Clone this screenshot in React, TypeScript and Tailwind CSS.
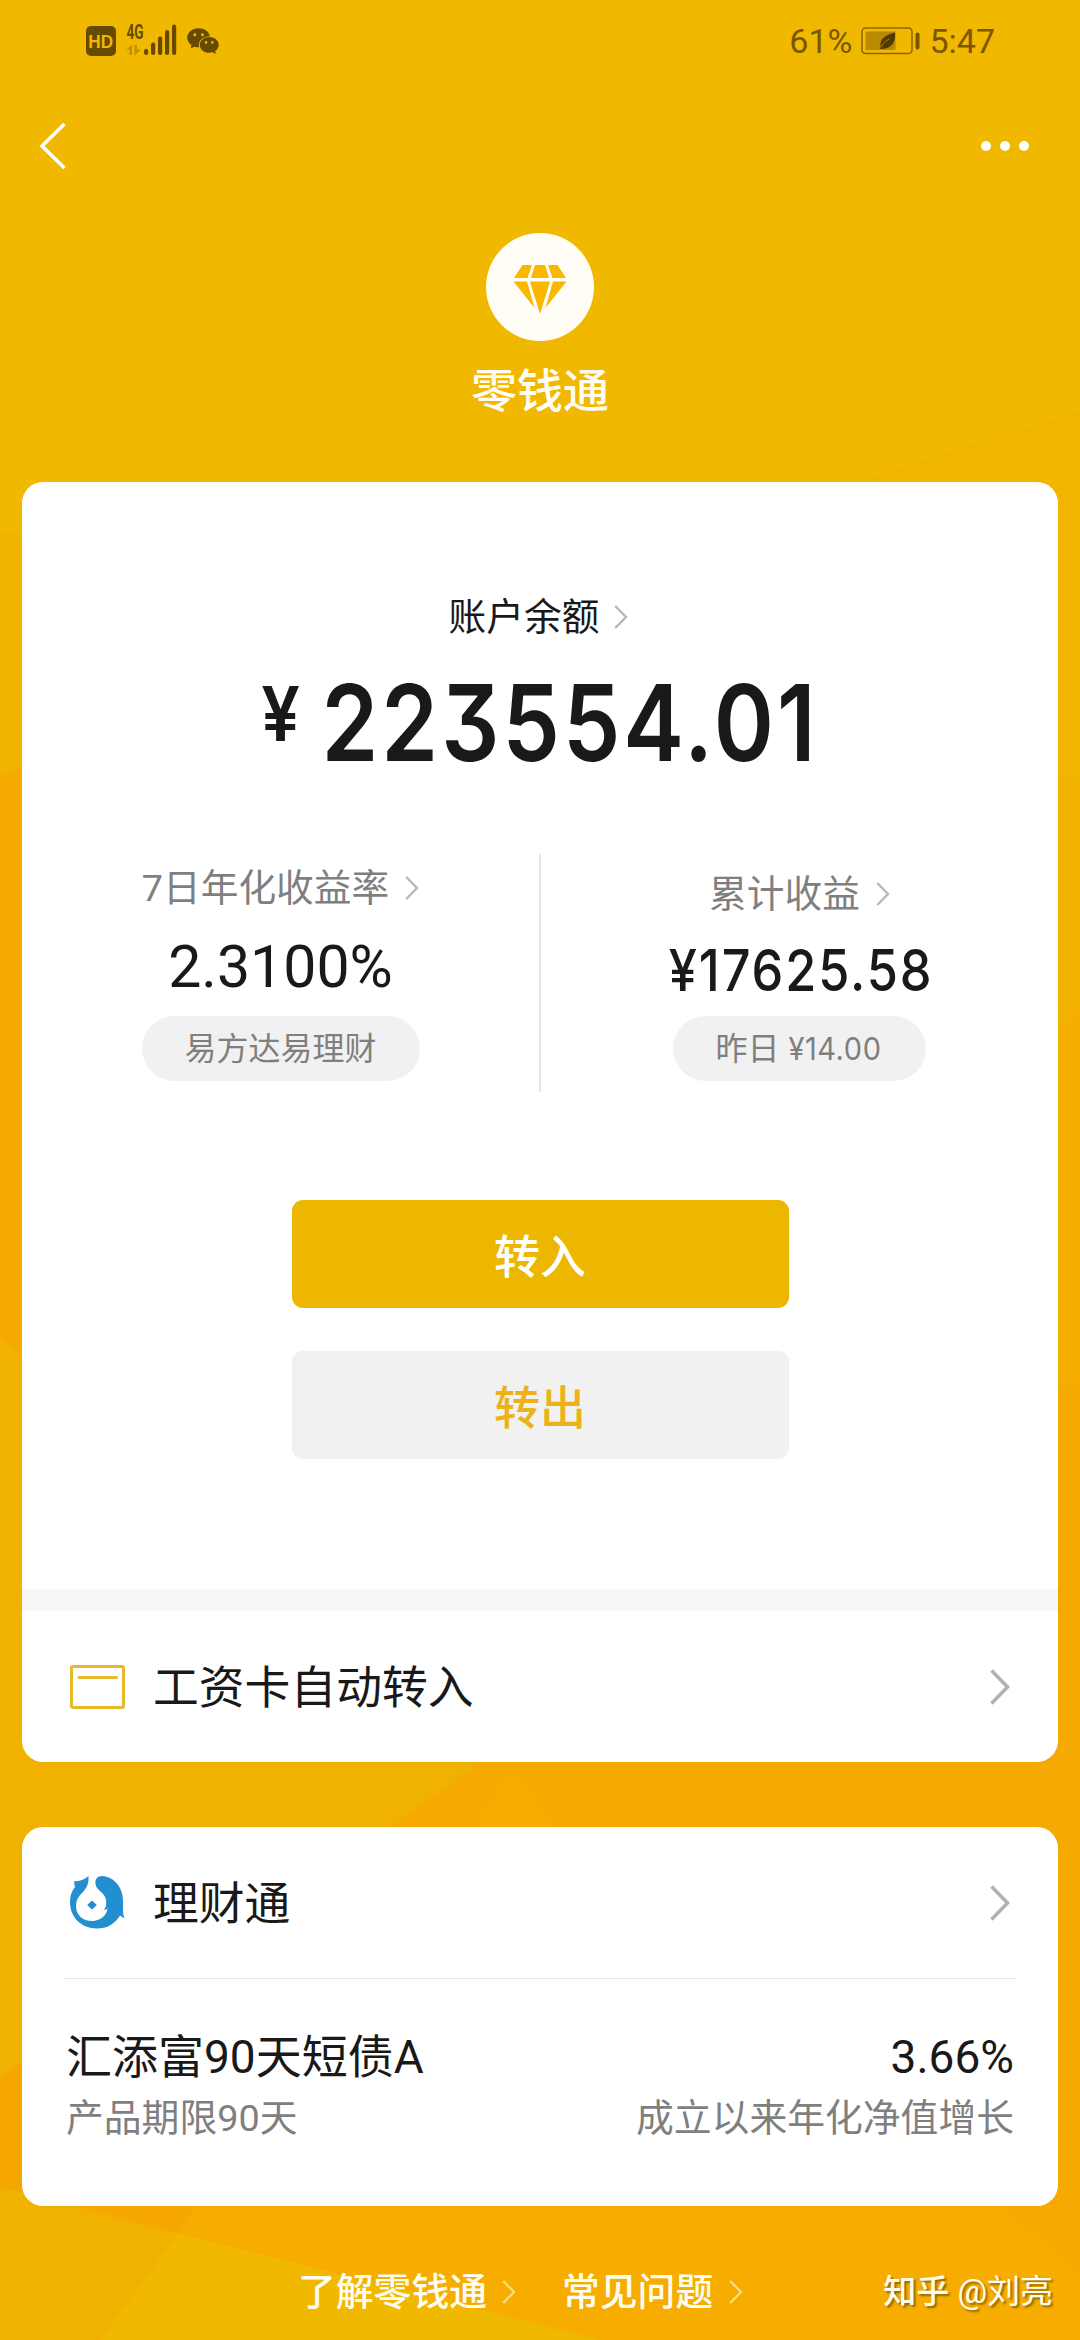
import { clsx } from "clsx";
import { AiFillWechat } from "react-icons/ai";

function Chevron({ className }: { className?: string }) {
  return (
    <svg
      viewBox="0 0 14 24"
      className={clsx("h-6 w-3.5 shrink-0", className)}
      fill="none"
      stroke="currentColor"
      strokeWidth="2.4"
    >
      <path d="M1.2 1 12 12 1.2 23" />
    </svg>
  );
}

function RowChevron() {
  return (
    <svg
      viewBox="0 0 20 36"
      className="h-9 w-5 shrink-0 text-[#b2b2b2]"
      fill="none"
      stroke="currentColor"
      strokeWidth="3.6"
    >
      <path d="M1.5 1.5 17.5 18 1.5 34.5" />
    </svg>
  );
}

function Backdrop() {
  return (
    <svg
      viewBox="0 0 1080 2340"
      className="absolute inset-0 h-full w-full"
      preserveAspectRatio="none"
    >
      <rect width="1080" height="2340" fill="#f1b800" />
      <path d="M860 482 1080 410V800H860Z" fill="#f1b500" />
      <path d="M0 530 40 540V780H0Z" fill="#f2b200" />
      <path d="M0 775 40 762V1380L0 1335Z" fill="#f6a900" />
      <path d="M1040 780H1080V1010L1040 1045Z" fill="#f3b100" />
      <path d="M1040 1045 1080 1010V1380L1040 1395Z" fill="#f4ae00" />
      <path d="M0 1335 40 1375V1700H566L390 1827 0 2077Z" fill="#f1b100" />
      <path d="M1080 1380V2340H0V2077L390 1827 566 1700H1040V1395Z" fill="#f6a900" />
      <path d="M475 1827 512 1772 556 1827Z" fill="#f7ad00" />
      <path d="M195 2206H1000L1080 2275V2340H178V2233Z" fill="#f6ad00" />
      <path d="M0 2077 22 2063V2191L80 2206H195L178 2233 0 2187Z" fill="#f5a600" />
      <path d="M0 2187 178 2233 100 2340H0Z" fill="#f1b100" />
      <path d="M178 2233 600 2340H100Z" fill="#f1b800" />
    </svg>
  );
}

function StatusBar() {
  return (
    <div className="flex h-[82px] items-center justify-between pr-[85px] pl-[86px] text-[#7a5600]">
      <div className="flex items-center">
        <div className="flex size-[30px] items-center justify-center rounded-[5px] bg-[#654a00] font-['Liberation_Sans'] text-[19px] leading-none font-bold text-[#f1b800]">
          <span className="scale-x-90">HD</span>
        </div>
        <svg viewBox="0 -5 52 48" className="ml-2.5 h-12 w-[52px]" fill="#654a00">
          <text
            x="0.5"
            y="17"
            fontFamily="Roboto"
            fontSize="20"
            fontWeight="700"
            textLength="17"
            lengthAdjust="spacingAndGlyphs"
          >
            4G
          </text>
          <path d="M0.5 27.500 6 22.500V33H3.500V27.500ZM8.500 23H11V27.500H15L8.500 33.500Z" opacity="0.35" />
          <rect x="18" y="27" width="4.200" height="6" rx="2" />
          <rect x="25" y="20.500" width="4.200" height="12.500" rx="2" />
          <rect x="32" y="14.500" width="4.200" height="18.500" rx="2" />
          <rect x="39" y="8" width="4.200" height="25" rx="2" />
          <rect x="46" y="2.500" width="4.200" height="30.500" rx="2" />
        </svg>
        <AiFillWechat className="ml-[7px] size-[36px] text-[#654a00]" />
      </div>
      <div className="flex items-center font-['Roboto'] text-[34px] leading-none">
        <span>61%</span>
        <svg viewBox="0 0 60 28" className="ml-[9px] h-7 w-[60px]" fill="none">
          <rect x="1" y="1" width="50" height="25.500" rx="3.500" stroke="#8f6500" strokeWidth="1.500" />
          <rect x="4.500" y="4.500" width="30" height="18.500" fill="#b98a00" />
          <path
            d="M34 5.500C24 8 18.500 12 19.500 20L18.500 21.500 20 22C29 22 35 17 34 5.500Z"
            fill="#4f3a00"
          />
          <path d="M20 20.500C22 16 25 13.500 28.500 12" stroke="#b98a00" strokeWidth="0.900" />
          <rect x="54.500" y="5.500" width="4" height="17" rx="2" fill="#7a5600" />
        </svg>
        <span className="ml-2">5:47</span>
      </div>
    </div>
  );
}

function NavBar() {
  return (
    <div className="flex h-[128px] items-center justify-between pr-[51px] pl-[39px] text-white">
      <svg viewBox="0 0 28 48" className="h-12 w-7" fill="none" stroke="currentColor" strokeWidth="3.6">
        <path d="M25.500 2 3 24 25.500 46" />
      </svg>
      <div className="flex gap-[9px]">
        <span className="size-2.5 rounded-full bg-white" />
        <span className="size-2.5 rounded-full bg-white" />
        <span className="size-2.5 rounded-full bg-white" />
      </div>
    </div>
  );
}

function Brand() {
  return (
    <div className="flex flex-col items-center pt-[23px]">
      <div className="flex size-[108px] items-center justify-center rounded-full bg-[#fffdf5]">
        <svg viewBox="0 0 54 49" className="mt-[5px] h-[49px] w-[54px]" fill="#fab700">
          <path d="M9.500 0H19L14.500 13H1Z" />
          <path d="M22 0H32L36 13H18Z" />
          <path d="M35 0H44.500L53 13H39.500Z" />
          <path d="M0.500 16.500H14L21.500 43Z" />
          <path d="M17 16.500H37L27 49Z" />
          <path d="M40 16.500H53.500L32.500 43Z" />
        </svg>
      </div>
      <h1 className="mt-5 h-[59px] text-[46px] leading-[60px] font-medium text-[#fffdf5]">
        零钱通
      </h1>
    </div>
  );
}

function BalanceCard() {
  return (
    <section className="mx-[22px] mt-[62px] h-[1280px] overflow-hidden rounded-[21px] bg-white">
      <div className="flex h-[165px] items-center justify-center gap-[15px] pt-[105px] pr-[3px] text-[37.7px] leading-[60px]">
        <span>账户余额</span>
        <Chevron className="text-[#b8b8b8]" />
      </div>
      <div className="mt-4 flex h-[120px] items-center justify-center font-['Inter'] font-semibold [font-feature-settings:'cv09']">
        <div className="flex origin-center scale-x-[0.86] items-center">
          <span className="-mt-[20px] mr-[26px] scale-x-105 text-[76px] leading-none">¥</span>
          <span className="text-[106px] leading-none tracking-[3.6px]">223554.01</span>
        </div>
      </div>

      <div className="mt-[71px] flex h-[238px]">
        <div className="flex flex-1 flex-col items-center pt-[11px]">
          <div className="flex h-[46px] items-center gap-4 text-[37.7px] leading-[46px] text-[#7f7f7f]">
            <span>7日年化收益率</span>
            <Chevron className="text-[#b8b8b8]" />
          </div>
          <span className="mt-[26px] h-[59px] text-[59px] leading-[60px]">2.3100%</span>
          <span className="mt-5 flex h-[65px] w-[278px] items-center justify-center rounded-full bg-[#f1f1f1] text-[32px] text-[#7f7f7f]">
            易方达易理财
          </span>
        </div>
        <div className="w-0.5 bg-[#e6e6e6]" />
        <div className="flex flex-1 flex-col items-center pt-[17px]">
          <div className="flex h-[46px] items-center gap-4 text-[37.7px] leading-[46px] text-[#7f7f7f]">
            <span>累计收益</span>
            <Chevron className="text-[#b8b8b8]" />
          </div>
          <span className="mt-[23px] ml-1 h-[60px] scale-x-[0.87] font-['Inter'] text-[58px] leading-[60px] font-medium tracking-[2.2px]">
            ¥17625.58
          </span>
          <span className="mt-4 flex h-[65px] w-[253px] items-center justify-center gap-1.5 rounded-full bg-[#f1f1f1] text-[32px] text-[#7f7f7f]">
            <span>昨日</span>
            <span className="scale-x-95 font-['Inter'] text-[30.5px] tracking-[0.6px]">¥14.00</span>
          </span>
        </div>
      </div>

      <div className="mt-[108px] flex flex-col items-center gap-[43px] text-[46px] font-medium">
        <button className="h-[108px] w-[497px] rounded-[11px] bg-[#edb600] pt-1.5 text-white">
          转入
        </button>
        <button className="h-[108px] w-[497px] rounded-[11px] bg-[#f1f1f1] pt-1.5 text-[#ecb21a]">
          转出
        </button>
      </div>

      <div className="mt-[130px] h-[22px] bg-[#f7f7f7]" />
      <div className="flex h-[151px] items-center pr-12 pl-12">
        <svg viewBox="0 0 55 44" className="h-11 w-[55px]" fill="none" stroke="#e6b92e" strokeWidth="3">
          <rect x="1.500" y="1.500" width="52" height="41" rx="1.500" />
          <path d="M9 12.500H46.500" strokeLinecap="round" />
        </svg>
        <span className="ml-7 flex-1 pt-1.5 text-[45.8px]">工资卡自动转入</span>
        <RowChevron />
      </div>
    </section>
  );
}

function LicaitongLogo() {
  return (
    <svg viewBox="0 0 55 53" className="h-[53px] w-[55px]" fill="#2290d0">
      <path d="M4.300 5Q12 6 18.500 0Q19.500 9 13 16Q6 22 6 30C6 39 13 45 22 45C30 45 36.500 40 37.700 32Q36 34.500 34 34Q37 30 36 24C35 17 28 15 26 10C24 4 27 0 32 0C45 1 53 12 53 25V34Q53 39 54.500 42.500Q52 41 50 39.500C45 48 37 52.500 27 52.500C11 52.500 0 41 0 26Q0 17 5 11Q4 8 4.300 5Z" />
      <path d="M22 24.500 26.800 29 22 33.500 17.200 29Z" />
    </svg>
  );
}

function FundCard() {
  return (
    <section className="mx-[22px] mt-[65px] h-[379px] rounded-[21px] bg-white px-[42px]">
      <div className="flex h-[152px] items-center border-b border-[#e5e5e5] px-1.5">
        <LicaitongLogo />
        <span className="ml-7 flex-1 pt-1.5 text-[45.8px]">理财通</span>
        <RowChevron />
      </div>
      <div className="mt-[50px] flex h-14 items-center justify-between px-0.5 text-[46px] leading-[56px]">
        <span>汇添富90天短债A</span>
        <span>3.66%</span>
      </div>
      <div className="mt-[13px] flex h-10 items-center justify-between px-0.5 text-[37.8px] leading-10 text-[#7f7f7f]">
        <span>产品期限90天</span>
        <span>成立以来年化净值增长</span>
      </div>
    </section>
  );
}

export default function App() {
  return (
    <main className="relative h-[2340px] w-[1080px] overflow-hidden font-['Roboto','Noto_Sans_CJK_SC',sans-serif] text-[#191919]">
      <Backdrop />
      <div className="relative">
        <StatusBar />
        <NavBar />
        <Brand />
        <BalanceCard />
        <FundCard />
        <footer className="mt-[61px] flex h-[50px] items-center pl-[298px] text-[37.8px] leading-[50px] font-medium text-[#fffdf0]">
          <span>了解零钱通</span>
          <Chevron className="ml-[15px] text-[#fbdc80]" />
          <span className="ml-[46px]">常见问题</span>
          <Chevron className="ml-4 text-[#fbdc80]" />
          <span className="ml-[140px] text-[33px] whitespace-nowrap [text-shadow:2px_2px_2px_rgba(90,60,0,0.6)]">
            知乎 <span className="font-normal">@刘亮</span>
          </span>
        </footer>
      </div>
    </main>
  );
}
